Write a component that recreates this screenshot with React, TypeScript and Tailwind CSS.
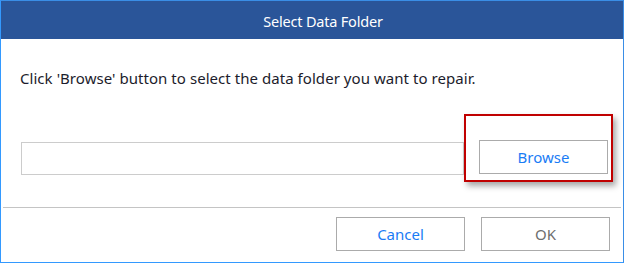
import React from "react";

export default function App() {
  const font = { fontFamily: '"Noto Sans", "Open Sans", sans-serif' };
  return (
    <div
      className="w-[625px] h-[263px] bg-white relative overflow-hidden"
      style={font}
    >
      <div className="w-[624px] h-[263px] flex flex-col border border-[#3a8ee6] border-l-[#3399ff] border-b-[#3399ff]">
        <div className="h-[38px] shrink-0 bg-[#2a5599] flex items-center justify-center pt-[3px] pl-[22px]">
          <span className="text-white text-[14.5px] tracking-[-0.2px]">Select Data Folder</span>
        </div>
        <div className="flex-1 flex flex-col">
          <p className="mt-[28px] ml-[19px] text-[15px] leading-[22px] text-[#1c1c2c] tracking-[0.05px]">
            Click 'Browse' button to select the data folder you want to repair.
          </p>
          <div className="mt-[51px] flex items-start pl-[20px]">
            <div className="mt-[2px] w-[443px] h-[33px] border border-[#cccccc] bg-white" />
            <div className="relative ml-[15px]">
              <button className="w-[129px] h-[34px] border border-[#ababab] bg-white text-[#1a7cf5] text-[15px]">
                Browse
              </button>
              <div className="absolute left-[-15px] top-[-26px] w-[149px] h-[68px] border-2 border-[#c00000] shadow-[3px_4px_6px_rgba(0,0,0,0.35)]" />
            </div>
          </div>
          <div className="mt-[32px] mx-[2px] h-px bg-[#c4c4c4]" />
          <div className="flex justify-end gap-[16px] pr-[13px] mt-[9px]">
            <button className="w-[129px] h-[34px] border border-[#ababab] bg-white text-[#1a7cf5] text-[15px]">
              Cancel
            </button>
            <button className="w-[129px] h-[34px] border border-[#ababab] bg-white text-[#6e6e6e] text-[15px]">
              OK
            </button>
          </div>
        </div>
      </div>
    </div>
  );
}
